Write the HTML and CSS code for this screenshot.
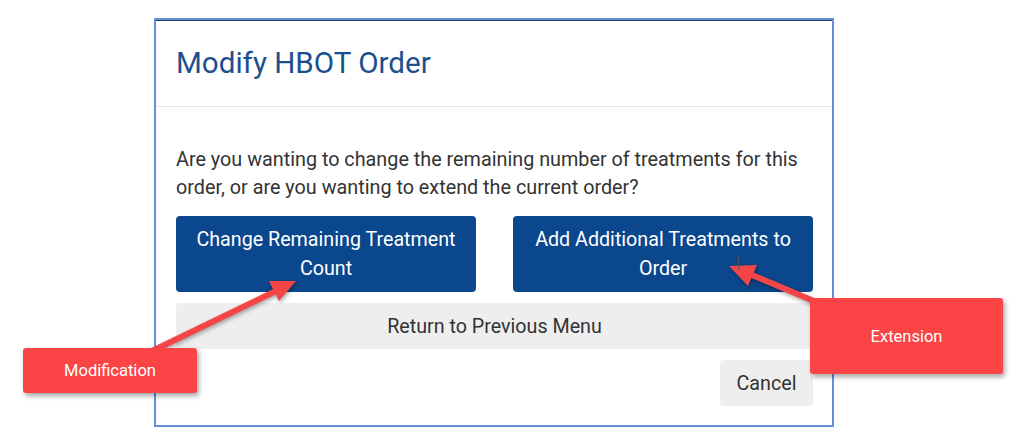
FILE: index.html
```html
<!DOCTYPE html>
<html lang="en">
<head>
<meta charset="utf-8">
<title>Modify HBOT Order</title>
<link rel="stylesheet" href="styles.css">
</head>
<body>
<div class="stage">
  <div class="modal">
    <div class="modal-header">
      <h1 class="modal-title">Modify HBOT Order</h1>
    </div>
    <div class="modal-body">
      <p class="prompt">Are you wanting to change the remaining number of treatments for this order, or are you wanting to extend the current order?</p>
      <div class="choice-row">
        <button class="btn btn-primary">Change Remaining Treatment Count</button>
        <button class="btn btn-primary">Add Additional Treatments to Order</button>
      </div>
      <button class="btn btn-light btn-block">Return to Previous Menu</button>
      <div class="footer-row">
        <button class="btn btn-light btn-cancel">Cancel</button>
      </div>
    </div>
  </div>

  <svg class="arrows" width="1024" height="448" viewBox="0 0 1024 448">
    <g class="arrow">
      <line x1="150" y1="352" x2="276" y2="291" stroke="#f54546" stroke-width="6"/>
      <polygon points="296,281 279,301 269,281" fill="#f54546"/>
    </g>
    <g class="arrow">
      <line x1="835" y1="310" x2="752" y2="275" stroke="#f54546" stroke-width="6"/>
      <polygon points="729,266 757,265 748,286" fill="#f54546"/>
    </g>
    <line x1="738.5" y1="257" x2="738.5" y2="270" stroke="#555" stroke-width="1"/>
  </svg>

  <div class="callout callout-mod">Modification</div>
  <div class="callout callout-ext">Extension</div>
</div>
</body>
</html>
```
FILE: styles.css
```css
html, body {
  margin: 0;
  padding: 0;
  background: #ffffff;
}
body {
  font-family: Roboto, "Liberation Sans", Arial, sans-serif;
  color: #333333;
}
.stage {
  position: relative;
  width: 1024px;
  height: 448px;
  overflow: hidden;
}
.modal {
  box-sizing: border-box;
  margin-left: 154px;
  margin-top: 18px;
  width: 680px;
  height: 409px;
  border: 2px solid #6390d8;
  box-shadow: inset 0 1px 0 #1f3a66;
  background: #ffffff;
  display: flex;
  flex-direction: column;
}
.modal-header {
  padding: 26px 20px 25px;
  border-bottom: 1px solid #e3e3e3;
}
.modal-title {
  margin: 0;
  font-weight: 400;
  font-size: 29.6px;
  line-height: 35px;
  color: #1c4f8e;
}
.modal-body {
  padding: 39px 19px 0 20px;
  display: flex;
  flex-direction: column;
}
.prompt {
  margin: 0 0 14px;
  font-size: 19.8px;
  line-height: 28px;
  color: #333;
}
.choice-row {
  display: flex;
  gap: 37px;
}
.btn {
  font-family: inherit;
  border: 0;
  border-radius: 4px;
  font-size: 19.7px;
  line-height: 29px;
  cursor: pointer;
}
.btn-primary {
  width: 301px;
  height: 76px;
  padding: 9px 10px;
  background: #0b478c;
  color: #ffffff;
}
.btn-light {
  background: #eeeeee;
  color: #333333;
}
.btn-block {
  margin-top: 11px;
  height: 46px;
  width: 100%;
}
.footer-row {
  display: flex;
  justify-content: flex-end;
  margin-top: 11px;
}
.btn-cancel {
  height: 46px;
  width: 93px;
}
.arrows {
  position: absolute;
  left: 0;
  top: 0;
  pointer-events: none;
}
.arrow {
  filter: drop-shadow(1px 2px 2px rgba(0,0,0,0.35));
}
.callout {
  position: absolute;
  display: flex;
  align-items: center;
  justify-content: center;
  background: #fb4445;
  color: #ffffff;
  font-family: Roboto, "Liberation Sans", Arial, sans-serif;
  font-size: 16.5px;
  border-radius: 3px;
  box-shadow: 2px 3px 5px rgba(0,0,0,0.35);
}
.callout-mod {
  left: 23px;
  top: 348px;
  width: 174px;
  height: 45px;
}
.callout-ext {
  left: 810px;
  top: 298px;
  width: 193px;
  height: 76px;
}
```
